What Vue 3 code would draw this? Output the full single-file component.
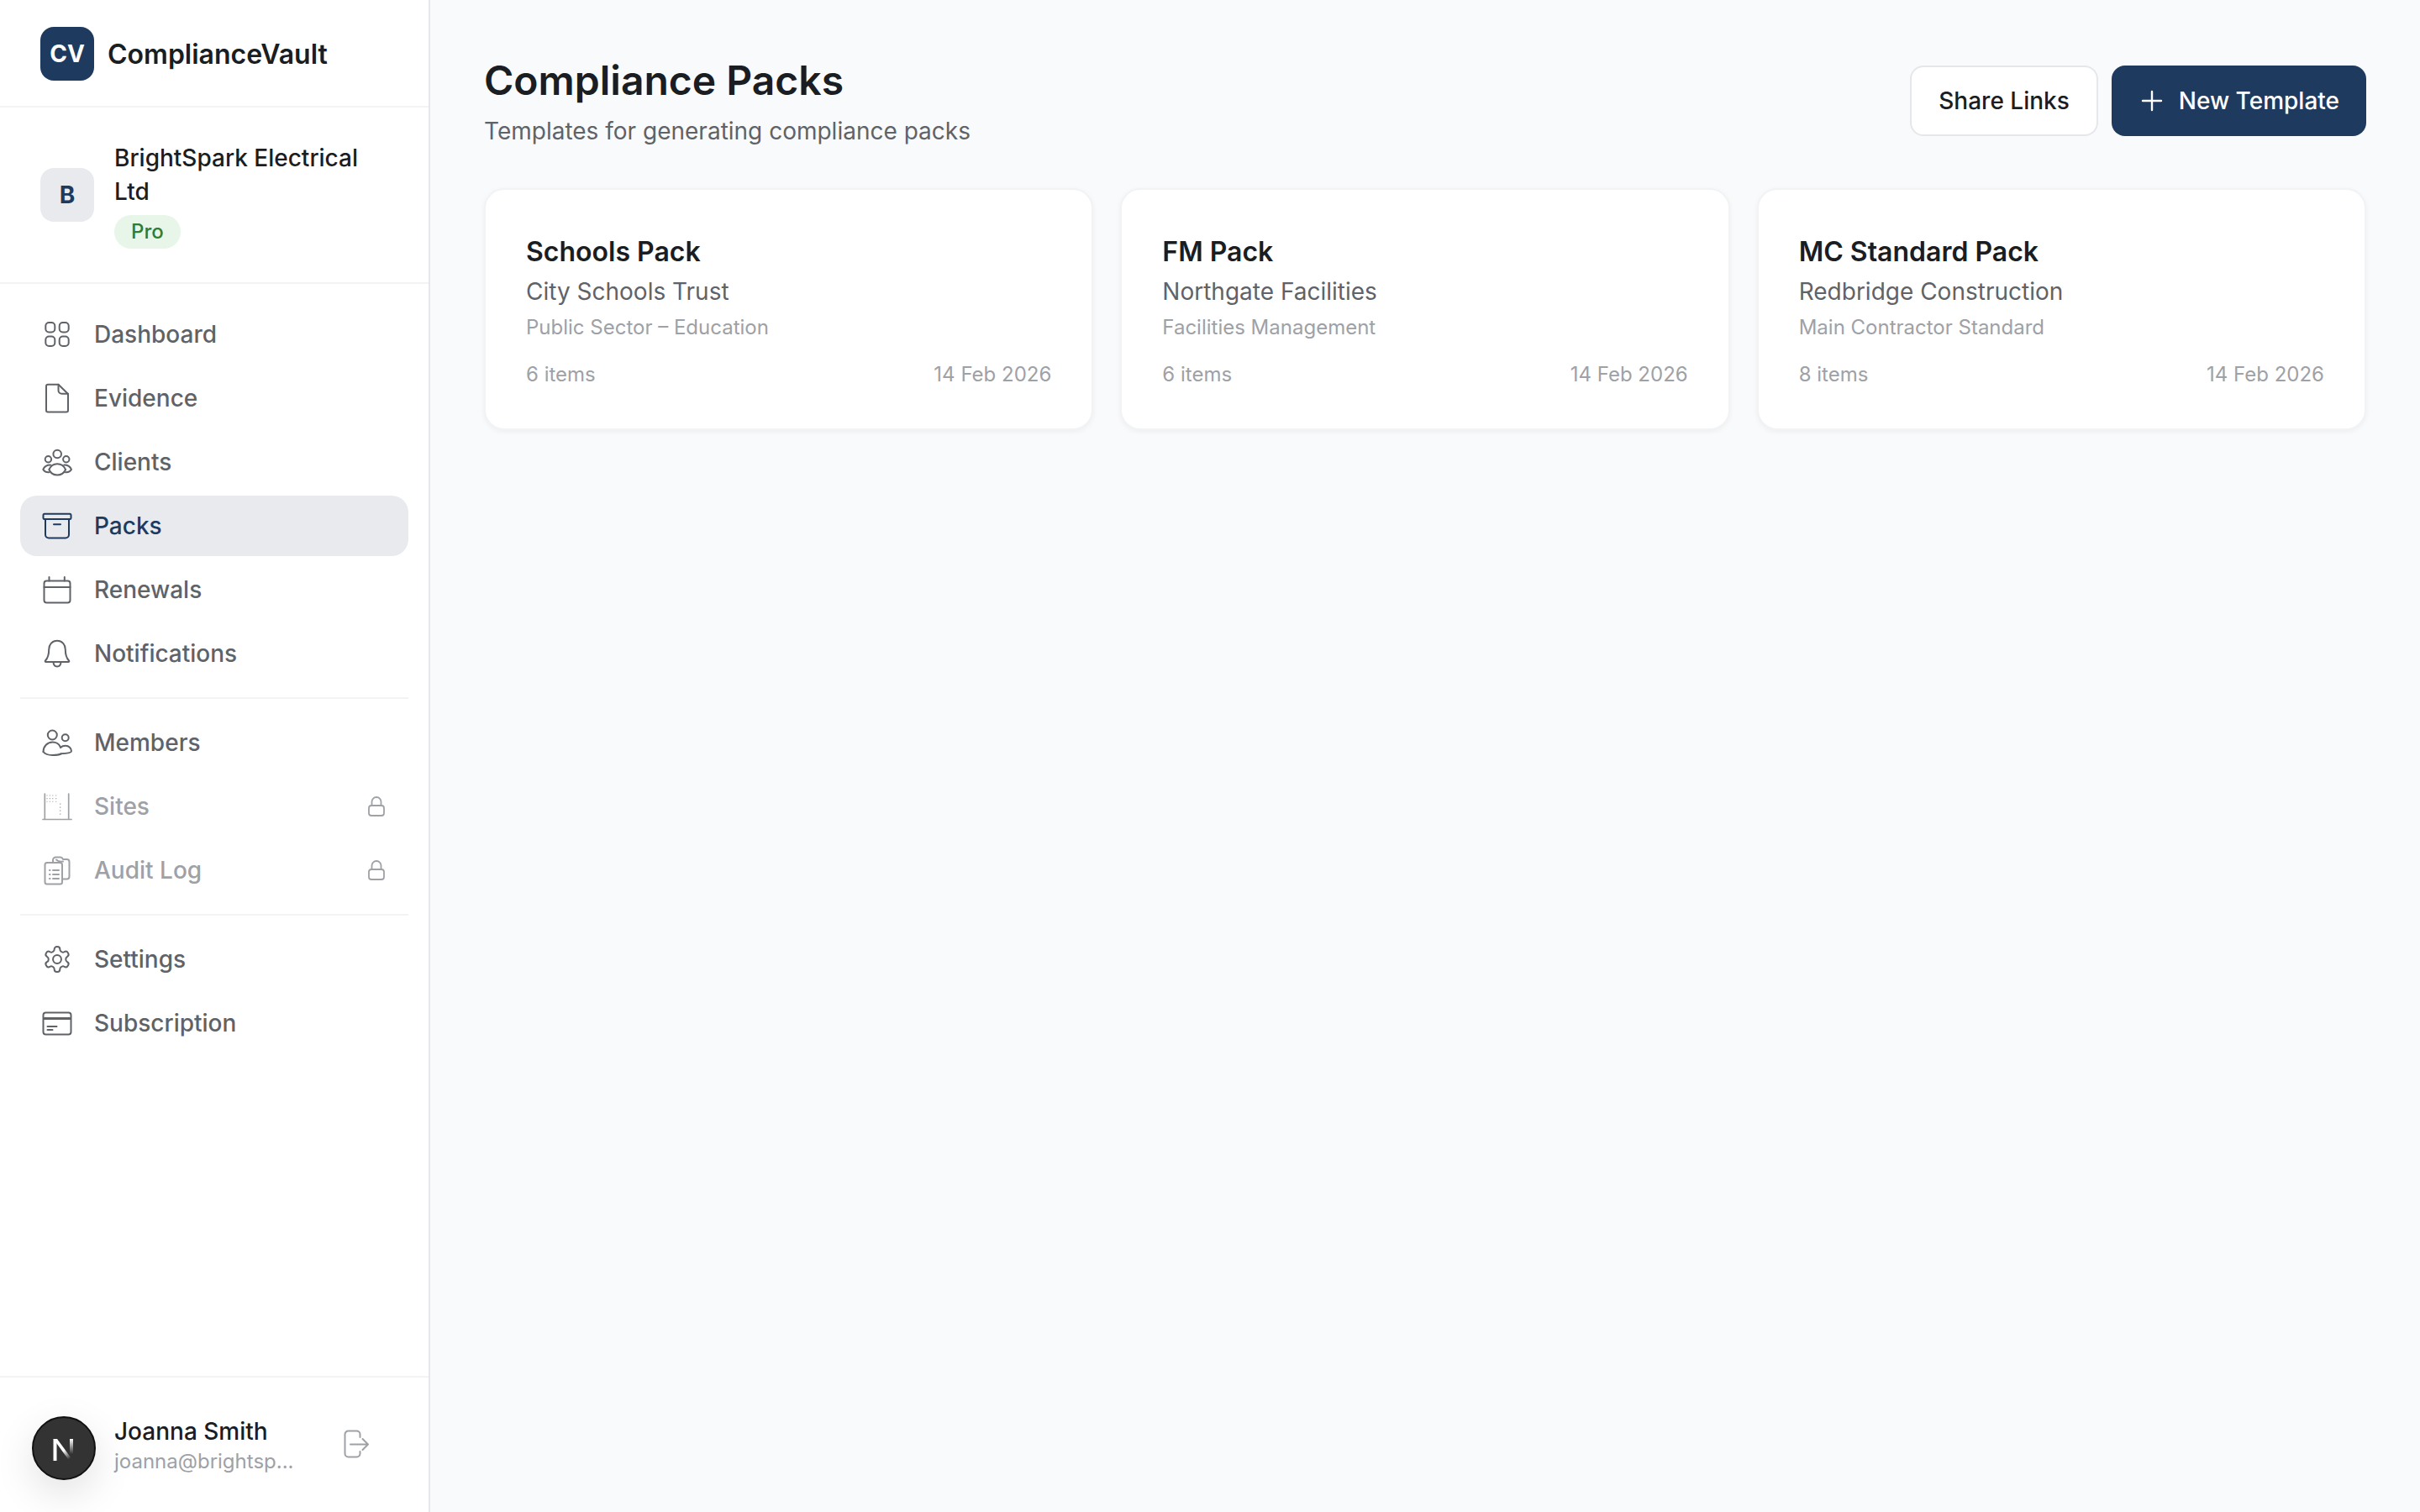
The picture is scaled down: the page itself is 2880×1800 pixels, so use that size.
<template>
  <div class="app-shell">
    <aside class="sidebar">
      <div class="brand">
        <div class="brand-mark">CV</div>
        <span class="brand-name">ComplianceVault</span>
      </div>

      <div class="tenant">
        <div class="tenant-avatar">B</div>
        <div class="tenant-info">
          <div class="tenant-name">BrightSpark Electrical Ltd</div>
          <span class="plan-badge">Pro</span>
        </div>
      </div>

      <nav class="nav">
        <template v-for="(group, i) in navGroups" :key="i">
          <div v-if="i > 0" class="nav-divider"></div>
          <a
            v-for="item in group"
            :key="item.label"
            class="nav-item"
            :class="{ active: item.active, locked: item.locked }"
          >
            <svg class="nav-icon" viewBox="0 0 36 36" fill="none" stroke="currentColor" stroke-width="2" stroke-linecap="round" stroke-linejoin="round" v-html="item.icon"></svg>
            <span class="nav-label">{{ item.label }}</span>
            <svg v-if="item.locked" class="lock-icon" viewBox="0 0 24 24" fill="none" stroke="currentColor" stroke-width="1.8" stroke-linejoin="round">
              <rect x="3" y="11" width="18" height="12" rx="3" />
              <path d="M6.500 11V6.500a5.500 5.500 0 0 1 11 0V11" />
            </svg>
          </a>
        </template>
      </nav>

      <div class="user-row">
        <div class="user-avatar"></div>
        <div class="user-info">
          <div class="user-name">Joanna Smith</div>
          <div class="user-email">joanna@brightsp...</div>
        </div>
        <button class="logout-btn" aria-label="Log out">
          <svg viewBox="0 0 36 36" fill="none" stroke="currentColor" stroke-width="2" stroke-linecap="round" stroke-linejoin="round">
            <path d="M22.500 10V6.500a4 4 0 0 0-4-4h-10a4 4 0 0 0-4 4v23a4 4 0 0 0 4 4h10a4 4 0 0 0 4-4V27" />
            <path d="M11 18.500h21M25.500 12l6.500 6.500-6.500 6.500" />
          </svg>
        </button>
      </div>
    </aside>

    <main class="main">
      <header class="page-header">
        <div>
          <h1 class="page-title">Compliance Packs</h1>
          <p class="page-sub">Templates for generating compliance packs</p>
        </div>
        <div class="page-actions">
          <button class="btn btn-outline">Share Links</button>
          <button class="btn btn-primary">
            <svg class="plus" viewBox="0 0 32 32" fill="none" stroke="currentColor" stroke-width="2.400" stroke-linecap="round">
              <path d="M16 5v22M5 16h22" />
            </svg>
            New Template
          </button>
        </div>
      </header>

      <section class="pack-grid">
        <article v-for="pack in packs" :key="pack.name" class="pack-card">
          <div class="pack-name">{{ pack.name }}</div>
          <div class="pack-client">{{ pack.client }}</div>
          <div class="pack-type">{{ pack.type }}</div>
          <div class="pack-meta">
            <span>{{ pack.items }} items</span>
            <span>{{ pack.date }}</span>
          </div>
        </article>
      </section>
    </main>

    <!-- dev tools badge sits over the user row -->
    <div class="dev-badge">
      <svg viewBox="0 0 72 72" width="72" height="72">
        <defs>
          <linearGradient id="nFadeA" x1="0" y1="0" x2="0.7" y2="1">
            <stop offset="0.6" stop-color="#fff" />
            <stop offset="1" stop-color="#fff" stop-opacity="0" />
          </linearGradient>
          <linearGradient id="nFadeB" x1="0" y1="0" x2="0" y2="1">
            <stop offset="0" stop-color="#fff" />
            <stop offset="1" stop-color="#fff" stop-opacity="0" />
          </linearGradient>
        </defs>
        <path d="M23.500 25h4v26h-4z" fill="#fff" />
        <path d="M23.500 25h4.500l19 26h-4.500z" fill="url(#nFadeA)" />
        <path d="M43 25h4v18h-4z" fill="url(#nFadeB)" />
      </svg>
    </div>
  </div>
</template>

<script setup>
// icons are drawn on a 36 box so they line up with the rows
const icons = {
  dashboard:
    '<rect x="4.300" y="4" width="11" height="11.500" rx="4"/><rect x="20.700" y="4" width="11" height="11.500" rx="4"/><rect x="4.300" y="20.500" width="11" height="11.500" rx="4"/><rect x="20.700" y="20.500" width="11" height="11.500" rx="4"/>',
  evidence:
    '<path d="M7 1.700h12.500L31 13v19.500a2 2 0 0 1-2 2H7a2 2 0 0 1-2-2V3.700a2 2 0 0 1 2-2z"/><path d="M19.500 1.700v7a4 4 0 0 0 4 4H31"/>',
  clients:
    '<circle cx="18.200" cy="8.500" r="4.800"/><circle cx="7.400" cy="14.800" r="3.700"/><circle cx="28.800" cy="14.800" r="3.700"/><path d="M8.300 27c2-4.500 5.500-6.800 9.900-6.800s7.900 2.300 9.900 6.800c-2 4.300-5.500 6.500-9.900 6.500S10.300 31.300 8.300 27z"/><path d="M10 21.500c-4 0-7.200 1.800-8.700 5.300 1.300 2.500 3.600 3.700 7 3.500M26.300 21.500c4 0 7.200 1.800 8.700 5.300-1.300 2.500-3.600 3.700-7 3.500"/>',
  packs:
    '<path d="M2.800 3.800h30.400a1.300 1.300 0 0 1 1.300 1.300v3.700a1.300 1.300 0 0 1-1.300 1.300H2.800a1.300 1.300 0 0 1-1.300-1.300V5.100a1.300 1.300 0 0 1 1.300-1.300z"/><path d="M4 10v18.500a4 4 0 0 0 4 4h20a4 4 0 0 0 4-4V10"/><path d="M14 16.300h8"/>',
  renewals:
    '<rect x="2.500" y="7.500" width="31" height="26" rx="3"/><path d="M2.500 15h31M8.500 3v4.500M26.800 3v4.500"/>',
  bell:
    '<path d="M18 2.800c-6.200 0-9.800 4.700-9.800 10.400 0 6.800-1.200 10-4.200 13.300-.6.700-.2 1.600.7 1.600h26.600c.9 0 1.300-.9.700-1.600-3-3.300-4.200-6.500-4.200-13.300 0-5.700-3.600-10.400-9.800-10.400z"/><path d="M13.500 28.500c.3 3.400 2.200 5 4.500 5s4.200-1.600 4.500-5"/>',
  members:
    '<circle cx="12.300" cy="9" r="5.500"/><circle cx="27.700" cy="12.300" r="4"/><path d="M1.500 29c0-6.500 5-11.500 11-11.500 4.500 0 8 2.500 9.500 6"/><path d="M1.500 29c2 2.500 6.500 4 11 4 4.500 0 8-.5 10-1.500"/><path d="M22 24c1.500-1.500 3.500-2.200 6-2.200 4 0 7 3 7 6.500 0 1.800-3.500 2.700-12.500 2.900"/>',
  sites:
    '<path d="M3.300 3v30M31.700 3v30M1 33.500h34" stroke-width="1.700"/><path d="M6 4.500v8.500M9.400 4.500v8.500M12.800 4.500v8.500M16.700 4.500v8.500" stroke-width="1.100" stroke-dasharray="1.100 2.500" stroke-linecap="butt"/><path d="M21.700 14.500v14" stroke-width="1.300" stroke-dasharray="1.300 2.700" stroke-linecap="butt"/>',
  audit:
    '<path d="M13 8.500V6a3.500 3.500 0 0 1 3.500-3.500h5.500A3.500 3.500 0 0 1 25 5h4.500a3 3 0 0 1 3 3v17.500a3 3 0 0 1-3 3H24"/><path d="M17 5.500c2 2 4 2.500 8 2"/><rect x="3.500" y="9" width="20.500" height="25.500" rx="2.500"/><path d="M13 18h7M13 23h7M13 28h7"/><path d="M9 18h.5M9 23h.5M9 28h.5" stroke-width="2.200"/>',
  settings:
    '<g transform="scale(1.5)" stroke-width="1.330"><path d="M12.220 2h-.44a2 2 0 0 0-2 2v.18a2 2 0 0 1-1 1.730l-.43.25a2 2 0 0 1-2 0l-.15-.08a2 2 0 0 0-2.730.73l-.22.38a2 2 0 0 0 .73 2.730l.15.1a2 2 0 0 1 1 1.720v.51a2 2 0 0 1-1 1.740l-.15.09a2 2 0 0 0-.73 2.730l.22.38a2 2 0 0 0 2.730.73l.15-.08a2 2 0 0 1 2 0l.43.25a2 2 0 0 1 1 1.730V20a2 2 0 0 0 2 2h.44a2 2 0 0 0 2-2v-.18a2 2 0 0 1 1-1.730l.43-.25a2 2 0 0 1 2 0l.15.08a2 2 0 0 0 2.730-.73l.22-.39a2 2 0 0 0-.73-2.730l-.15-.08a2 2 0 0 1-1-1.740v-.5a2 2 0 0 1 1-1.740l.15-.09a2 2 0 0 0 .73-2.730l-.22-.38a2 2 0 0 0-2.730-.73l-.15.08a2 2 0 0 1-2 0l-.43-.25a2 2 0 0 1-1-1.730V4a2 2 0 0 0-2-2z"/><circle cx="12" cy="12" r="3.300"/></g>',
  card:
    '<rect x="1.500" y="5.500" width="33" height="26" rx="3"/><path d="M1.500 12.500h33" stroke-width="2.800" stroke-linecap="butt"/><path d="M6.500 22h11M6.500 26h6"/>'
}

const navGroups = [
  [
    { label: 'Dashboard', icon: icons.dashboard },
    { label: 'Evidence', icon: icons.evidence },
    { label: 'Clients', icon: icons.clients },
    { label: 'Packs', icon: icons.packs, active: true },
    { label: 'Renewals', icon: icons.renewals },
    { label: 'Notifications', icon: icons.bell }
  ],
  [
    { label: 'Members', icon: icons.members },
    { label: 'Sites', icon: icons.sites, locked: true },
    { label: 'Audit Log', icon: icons.audit, locked: true }
  ],
  [
    { label: 'Settings', icon: icons.settings },
    { label: 'Subscription', icon: icons.card }
  ]
]

const packs = [
  { name: 'Schools Pack', client: 'City Schools Trust', type: 'Public Sector – Education', items: 6, date: '14 Feb 2026' },
  { name: 'FM Pack', client: 'Northgate Facilities', type: 'Facilities Management', items: 6, date: '14 Feb 2026' },
  { name: 'MC Standard Pack', client: 'Redbridge Construction', type: 'Main Contractor Standard', items: 8, date: '14 Feb 2026' }
]
</script>

<style>
html, body {
  margin: 0;
  background: #f9fafb;
}
</style>

<style scoped>
.app-shell {
  display: flex;
  min-height: 1800px;
  font-family: Inter, "Liberation Sans", sans-serif;
  color: #1a1d21;
}

.sidebar {
  width: 510px;
  height: 1800px;
  flex-shrink: 0;
  display: flex;
  flex-direction: column;
  background: #fff;
  border-right: 2px solid #e5e7eb;
}

.brand {
  box-sizing: border-box;
  height: 128px;
  padding: 2px 48px 0;
  display: flex;
  align-items: center;
  gap: 16px;
  border-bottom: 2px solid #f1f3f5;
}

.brand-mark {
  width: 64px;
  height: 64px;
  border-radius: 16px;
  background: #1e3a5f;
  color: #fff;
  font-size: 28px;
  font-weight: 700;
  display: flex;
  align-items: center;
  justify-content: center;
}

.brand-name {
  font-size: 32px;
  font-weight: 600;
}

.tenant {
  display: flex;
  align-items: center;
  gap: 24px;
  padding: 40px 48px;
  border-bottom: 2px solid #f1f3f5;
}

.tenant-avatar {
  width: 64px;
  height: 64px;
  flex-shrink: 0;
  border-radius: 16px;
  background: #e9eaee;
  color: #1e3a5f;
  font-size: 28px;
  font-weight: 700;
  display: flex;
  align-items: center;
  justify-content: center;
}

.tenant-info {
  display: flex;
  flex-direction: column;
  align-items: flex-start;
  gap: 8px;
}

.tenant-name {
  font-size: 28px;
  line-height: 40px;
  font-weight: 500;
}

.plan-badge {
  height: 40px;
  padding: 0 20px;
  border-radius: 20px;
  background: #e8f5e9;
  color: #2e7d32;
  font-size: 24px;
  font-weight: 500;
  line-height: 40px;
}

.nav {
  flex: 1;
  padding: 24px 24px 0;
  display: flex;
  flex-direction: column;
  gap: 4px;
}

.nav-item {
  height: 72px;
  display: flex;
  align-items: center;
  gap: 26px;
  padding: 0 26px;
  border-radius: 20px;
  font-size: 28px;
  font-weight: 500;
  color: #5f6368;
}

.nav-item.active {
  background: #e9eaee;
  color: #1e3a5f;
}

.nav-item.locked {
  color: #9ea1a6;
}

.nav-icon {
  width: 36px;
  height: 36px;
  flex-shrink: 0;
}

.nav-label {
  flex: 1;
}

.lock-icon {
  width: 24px;
  height: 24px;
}

.nav-divider {
  height: 2px;
  background: #f1f3f5;
  margin: 12px 0;
}

.user-row {
  height: 162px;
  box-sizing: border-box;
  display: flex;
  align-items: center;
  padding: 0 48px;
  border-top: 2px solid #f1f3f5;
}

.user-avatar {
  width: 64px;
  height: 64px;
  flex-shrink: 0;
  margin-right: 24px;
  border-radius: 50%;
  background: #e9eaee;
}

.user-info {
  width: 246px;
  margin-right: 24px;
}

.user-name {
  font-size: 28px;
  line-height: 40px;
  font-weight: 500;
}

.user-email {
  font-size: 24px;
  line-height: 32px;
  color: #9ea1a6;
  white-space: nowrap;
}

.logout-btn {
  width: 36px;
  height: 36px;
  padding: 0;
  margin-top: -2px;
  border: none;
  background: none;
  color: #9ea1a6;
}

.logout-btn svg {
  display: block;
  width: 36px;
  height: 36px;
}

.main {
  flex: 1;
  padding: 64px;
}

.page-header {
  display: flex;
  align-items: center;
  justify-content: space-between;
  margin-bottom: 48px;
}

.page-title {
  margin: 0 0 8px;
  font-size: 48px;
  line-height: 64px;
  font-weight: 600;
}

.page-sub {
  margin: 0;
  font-size: 28px;
  line-height: 40px;
  color: #5f6368;
}

.page-actions {
  display: flex;
  gap: 16px;
}

.btn {
  height: 84px;
  box-sizing: border-box;
  border-radius: 16px;
  font-family: inherit;
  font-size: 28px;
  font-weight: 500;
  display: flex;
  align-items: center;
}

.btn-outline {
  padding: 0 32px;
  background: #fff;
  border: 2px solid #e5e7eb;
  color: #1a1d21;
}

.btn-primary {
  gap: 16px;
  padding: 0 32px;
  background: #1e3a5f;
  border: none;
  color: #fff;
}

.plus {
  width: 32px;
  height: 32px;
}

.pack-grid {
  display: grid;
  grid-template-columns: repeat(3, 1fr);
  gap: 32px;
}

.pack-card {
  box-sizing: border-box;
  height: 288px;
  padding: 50px 48px 46px;
  background: #fff;
  border: 2px solid #f1f3f5;
  border-radius: 24px;
  box-shadow: 0 2px 6px rgba(0, 0, 0, 0.05);
}

.pack-name {
  font-size: 32px;
  line-height: 48px;
  font-weight: 600;
}

.pack-client {
  margin-top: 2px;
  font-size: 28px;
  line-height: 42px;
  color: #5f6368;
}

.pack-type {
  margin-top: 4px;
  font-size: 24px;
  line-height: 36px;
  color: #9ea1a6;
}

.pack-meta {
  margin-top: 24px;
  display: flex;
  justify-content: space-between;
  font-size: 24px;
  line-height: 28px;
  color: #9ea1a6;
}

.dev-badge {
  position: fixed;
  left: 38px;
  bottom: 38px;
  width: 72px;
  height: 72px;
  border-radius: 50%;
  background: #333;
  border: 2px solid #111;
  box-shadow: 0 16px 48px rgba(0, 0, 0, 0.12);
}

.dev-badge svg {
  display: block;
}
</style>
